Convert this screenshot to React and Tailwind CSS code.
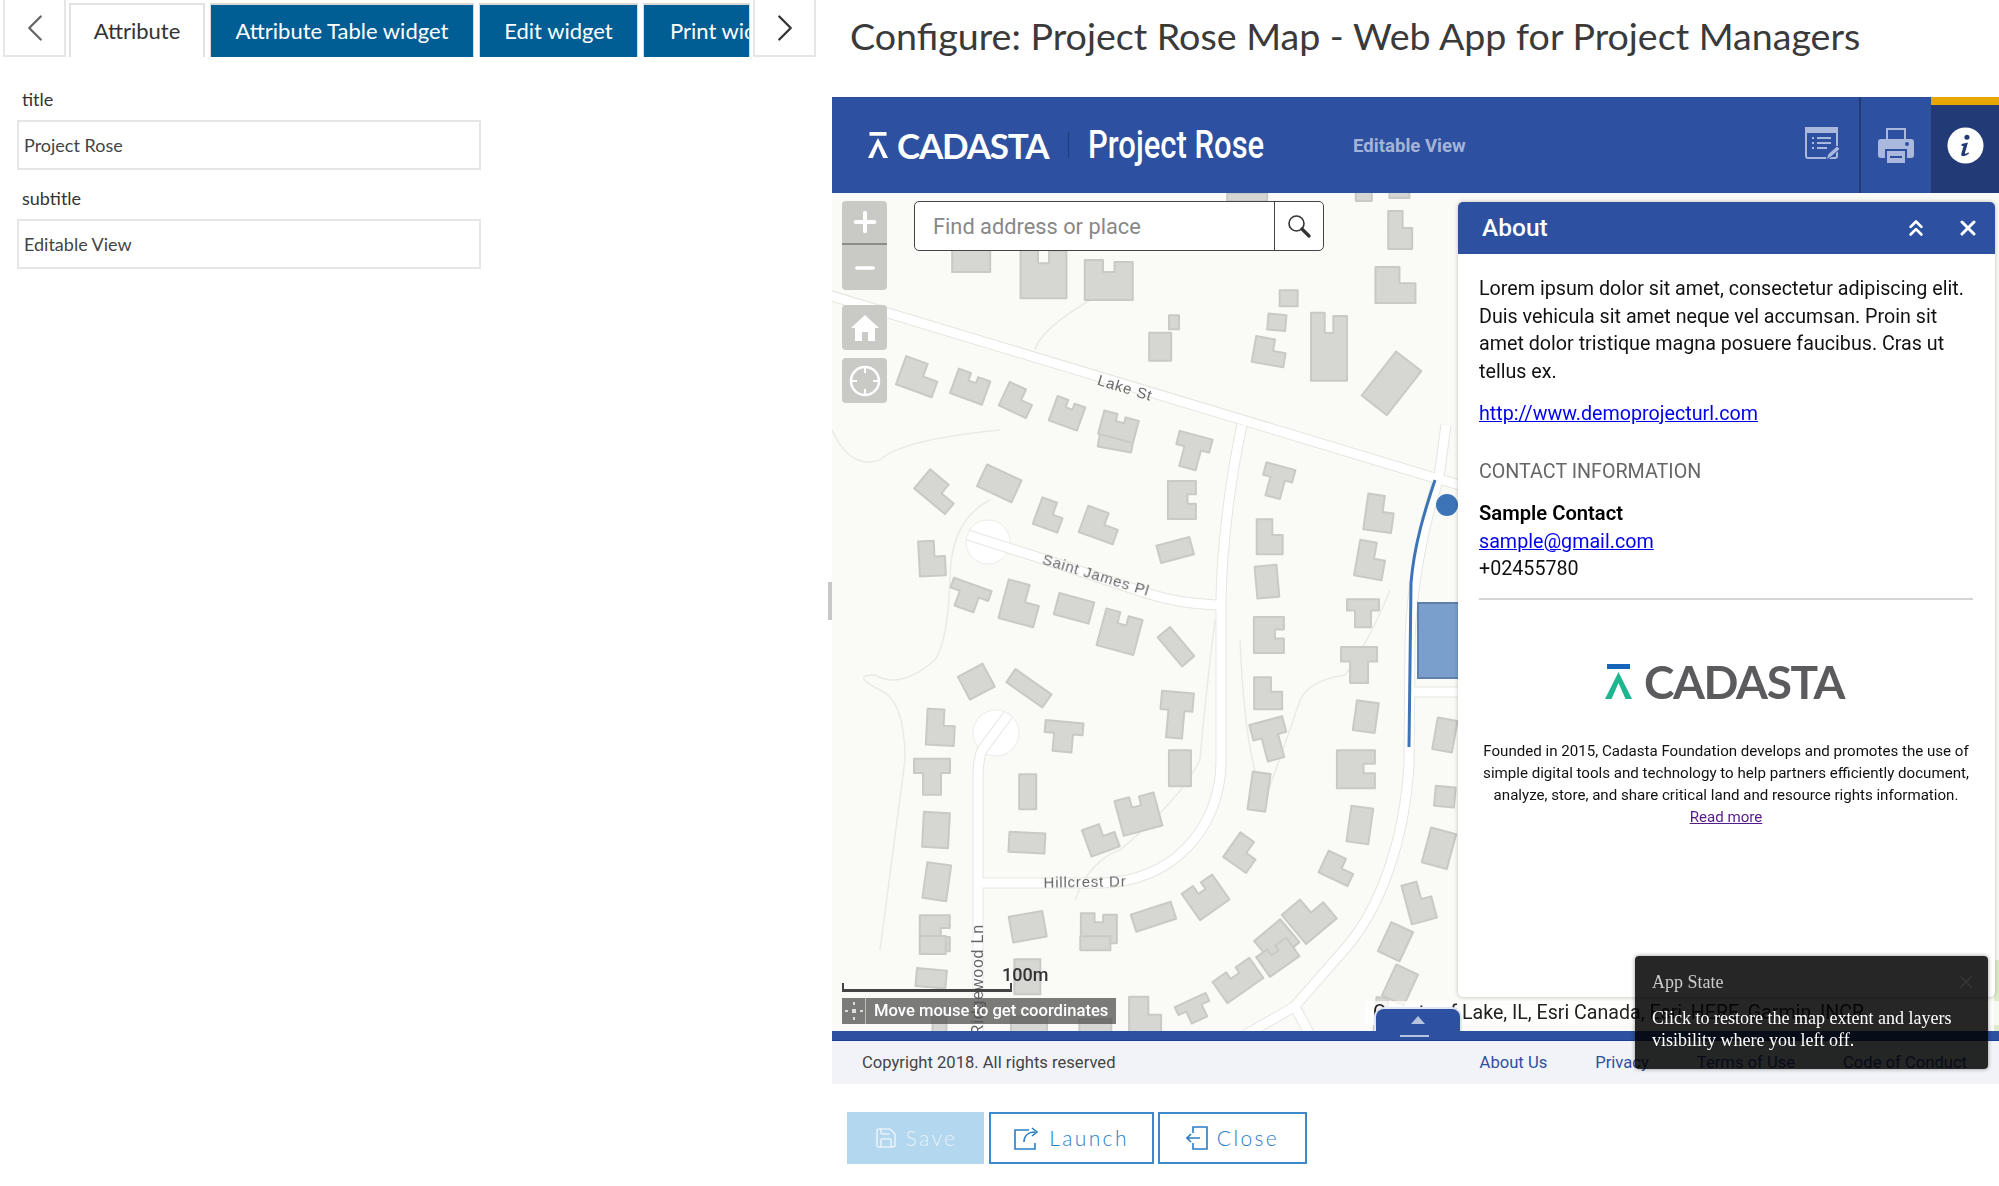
import { ChevronLeft, ChevronRight, ChevronsUp, Plus, Minus, X, Save } from 'lucide-react';

// building footprints in unit coords
const SHAPES = {
  R: [[0, 0], [1, 0], [1, 1], [0, 1]],
  L: [[0, 0], [0.6, 0], [0.6, 0.45], [1, 0.45], [1, 1], [0, 1]],
  U: [[0, 0], [0.38, 0], [0.38, 0.3], [0.62, 0.3], [0.62, 0.05], [1, 0.05], [1, 1], [0, 1]],
  T: [[0, 0], [1, 0], [1, 0.4], [0.75, 0.4], [0.75, 1], [0.25, 1], [0.25, 0.4], [0, 0.4]],
  C: [[0, 0], [1, 0], [1, 0.35], [0.7, 0.35], [0.7, 0.6], [1, 0.6], [1, 1], [0, 1]],
};

// [zoomX, zoomY, w, h, rot, shape] - measured off the middle crop
const MID = [
  [272, 185, 40, 25, 40, 'L'], [428, 160, 38, 24, 25, 'R'], [556, 255, 26, 28, 20, 'L'], [684, 285, 36, 28, 20, 'L'],
  [890, 210, 28, 38, 0, 'C'], [873, 360, 34, 18, -15, 'R'], [915, 65, 34, 34, 15, 'T'], [725, 20, 34, 26, 10, 'U'],
  [258, 385, 26, 35, -3, 'L'], [350, 500, 40, 26, 20, 'T'], [483, 520, 36, 40, 15, 'L'], [617, 535, 36, 22, 15, 'R'],
  [733, 605, 38, 38, 15, 'U'], [875, 650, 38, 16, 50, 'R'], [370, 755, 28, 26, -28, 'R'], [503, 775, 44, 16, 35, 'R'],
  [280, 892, 28, 36, 3, 'L'], [590, 920, 38, 30, 5, 'T'], [875, 855, 32, 46, 5, 'T'], [885, 1015, 22, 36, 0, 'R'],
  [258, 1040, 36, 36, 0, 'T'], [500, 1085, 17, 35, 0, 'R'], [268, 1200, 26, 35, 3, 'R'], [270, 1355, 24, 36, 8, 'R'],
  [498, 1238, 36, 20, 3, 'R'], [685, 1225, 30, 28, -20, 'L'], [780, 1150, 40, 36, -15, 'U'], [265, 1510, 30, 36, 0, 'C'],
  [500, 1490, 34, 26, -10, 'R'], [680, 1495, 36, 30, 0, 'U'], [818, 1460, 42, 18, -18, 'R'], [950, 1400, 36, 32, -35, 'U'],
  [1212, 1460, 40, 38, -40, 'L'], [1130, 1535, 34, 30, -40, 'R'], [1045, 1268, 28, 30, 35, 'L'], [1085, 1085, 18, 38, 8, 'R'],
  [1115, 930, 34, 40, -15, 'T'], [1108, 790, 28, 32, 0, 'L'], [1110, 615, 30, 36, 0, 'C'], [1105, 455, 22, 32, -5, 'R'],
  [1112, 320, 26, 35, 0, 'L'], [1130, 155, 30, 32, 15, 'T'], [1338, 705, 36, 36, 0, 'T'], [1348, 550, 32, 28, 0, 'T'],
  [1368, 390, 28, 36, 10, 'L'], [1390, 250, 28, 36, 8, 'L'], [1355, 860, 22, 30, 8, 'R'], [1330, 1018, 38, 38, 0, 'C'],
  [1340, 1185, 22, 36, 8, 'R'], [1285, 1315, 32, 24, 25, 'L'], [1490, 1415, 26, 40, -15, 'L'], [1540, 1255, 26, 36, 15, 'R'],
  [1555, 915, 20, 32, 10, 'R'], [1555, 1100, 20, 20, 5, 'R'], [1430, 1535, 24, 32, 25, 'R'],
];

// same, off the top crop
const TOP = [
  [357, 510, 38, 24, 0, 'R'], [540, 550, 46, 50, 0, 'U'], [705, 570, 48, 40, 0, 'U'], [1442, 420, 24, 38, 0, 'L'],
  [1430, 585, 40, 36, 0, 'L'], [1160, 625, 18, 16, 0, 'R'], [1130, 697, 18, 16, 5, 'R'], [870, 697, 10, 14, 0, 'R'],
  [835, 770, 22, 28, 0, 'R'], [1112, 785, 32, 26, 10, 'L'], [1262, 770, 36, 68, 0, 'U'], [1420, 880, 32, 56, 38, 'R'],
  [225, 860, 38, 30, 20, 'L'], [355, 890, 34, 26, 20, 'U'], [475, 930, 30, 26, 25, 'L'], [600, 970, 30, 26, 20, 'U'],
  [730, 1010, 36, 24, 15, 'U'], [1350, 318, 16, 10, 0, 'R'], [1440, 312, 20, 8, 0, 'R'], [1055, 322, 40, 8, 0, 'R'],
];

// same, off the bottom crop
const BOTTOM = [
  [305, 115, 30, 18, 5, 'R'], [595, 110, 26, 35, 0, 'R'], [1230, 120, 44, 26, -35, 'U'], [1350, 50, 36, 24, -35, 'U'],
  [950, 230, 32, 40, 0, 'L'], [1100, 210, 34, 22, -25, 'T'], [800, 10, 30, 14, 0, 'R'], [310, 15, 26, 18, 0, 'R'],
  [600, 265, 36, 24, 0, 'R'], [800, 270, 32, 22, 0, 'R'], [330, 262, 14, 22, 0, 'R'],
];

const BUILDINGS = [
  ...MID.map(([x, y, ...r]) => [830 + x / 2.529, 430 + y / 3, ...r]),
  ...TOP.map(([x, y, ...r]) => [830 + x / 2.529, 90 + y / 3, ...r]),
  ...BOTTOM.map(([x, y, ...r]) => [830 + x / 3.015, 940 + y / 3, ...r]),
  [1400, 985, 24, 34, 25, 'R'],
  [1385, 1015, 20, 34, 5, 'L'],
];

const ROADS = [
  'M825 294 L1435 478 L1470 488',
  'M1242 425 C1232 470 1222 540 1221 600 L1221 763 C1220 830 1170 883 1100 883 L978 883',
  'M1008 715 L982 750 Q978 760 978 777 L978 1035',
  'M968 535 L1040 558 L1146 593 Q1180 604 1217 605',
  'M1446 425 L1439 477 C1425 520 1412 580 1410 640 L1409 763 C1405 840 1380 910 1344 950 L1294 1007 L1245 1035',
  'M1294 1005 L1310 1035',
  'M1412 692 L1460 692',
];

const TRAILS = [
  'M832 430 Q850 470 880 460 Q900 440 1000 430',
  'M990 500 Q950 520 950 580 Q948 640 935 660 Q900 690 875 675 Q850 675 880 690 Q905 700 905 760 L880 950',
  'M1075 900 Q1090 860 1120 850 Q1180 800 1200 760 Q1205 700 1215 620',
  'M1240 640 Q1245 760 1265 800 Q1290 730 1300 700 Q1310 680 1345 675 Q1370 640 1390 590',
  'M1090 300 Q1040 330 1035 350',
];

function MapArt() {
  return (
    <svg width="1167" height="838" viewBox="832 193 1167 838" className="block">
      <defs>
        <filter id="soft">
          <feGaussianBlur stdDeviation="0.5" />
        </filter>
      </defs>
      <rect x="832" y="193" width="1167" height="838" fill="#fafaf6" />
      <rect x="1994" y="960" width="6" height="75" fill="#dcebc8" />
      {TRAILS.map((d) => (
        <path key={d} d={d} fill="none" stroke="#ebebe6" strokeWidth="1.5" />
      ))}
      <circle cx="988" cy="542" r="22" fill="#fff" stroke="#ececE8" />
      <circle cx="996" cy="733" r="23" fill="#fff" stroke="#ececE8" />
      {ROADS.map((d) => (
        <path key={d} d={d} fill="none" stroke="#e6e6e1" strokeWidth="11" />
      ))}
      {ROADS.map((d) => (
        <path key={d + 'w'} d={d} fill="none" stroke="#fff" strokeWidth="9" />
      ))}
      <g filter="url(#soft)">
        {BUILDINGS.map(([x, y, w, h, rot, s], i) => (
          <polygon
            key={i}
            transform={`translate(${x} ${y}) rotate(${rot})`}
            points={SHAPES[s].map(([px, py]) => `${(px - 0.5) * w},${(py - 0.5) * h}`).join(' ')}
            fill="#d6d6d3"
            stroke="#c9c9c6"
            strokeWidth="2"
            strokeLinejoin="round"
          />
        ))}
      </g>
      <rect x="1418" y="603" width="44" height="75" fill="#7a9fcc" stroke="#5f80ab" strokeWidth="2" />
      <path d="M1435 480 C1425 510 1414 545 1411 583 L1409 747" fill="none" stroke="#3d74b8" strokeWidth="3" />
      <circle cx="1447" cy="505" r="11" fill="#3d74b8" />
      <g fill="#666" fontFamily="'Liberation Sans',sans-serif" fontSize="15" letterSpacing="0.8">
        <text x="1125" y="393" textAnchor="middle" transform="rotate(17 1125 388)">Lake St</text>
        <text x="1096" y="580" textAnchor="middle" transform="rotate(17 1096 575)">Saint James Pl</text>
        <text x="1085" y="887" textAnchor="middle" transform="rotate(-1 1085 881)">Hillcrest Dr</text>
        <text x="978" y="985" fontSize="16" textAnchor="middle" transform="rotate(-90 978 980)">Ridgewood Ln</text>
      </g>
    </svg>
  );
}

function CadastaMark({ top = '#fff', legs = '#fff' }) {
  return (
    <svg viewBox="0 0 27 35" className="h-full w-full">
      <rect x="2" y="0" width="23" height="5" fill={top} />
      <path d="M13.5 8 L0 35 H6.5 L13.5 19 L20.5 35 H27 Z" fill={legs} />
    </svg>
  );
}

function FormIcon() {
  return (
    <svg viewBox="0 0 36 36" className="h-[36px] w-[36px]" fill="none" stroke="#a9b8dc" strokeWidth="2">
      <rect x="1" y="1" width="31" height="30" rx="2" />
      <rect x="1" y="1" width="31" height="4" fill="#a9b8dc" />
      <path d="M7 11h2M12 11h14M7 16h2M12 16h14M7 21h2M12 21h10" />
      <path d="M21 33l2-6 9-8 3 3-9 8z" fill="#a9b8dc" stroke="#2d50a0" strokeWidth="1" />
    </svg>
  );
}

function PrintIcon() {
  return (
    <svg viewBox="0 0 36 36" className="h-[36px] w-[36px]" fill="#a9b8dc">
      <path d="M8 1h20v12h-2V3H10v10H8z" />
      <path d="M3 12h30a3 3 0 0 1 3 3v13a3 3 0 0 1-3 3h-4v-9H7v9H3a3 3 0 0 1-3-3V15a3 3 0 0 1 3-3z" />
      <path d="M9 24h18v12H9zM12 29v2h12v-2z" fillRule="evenodd" />
      <circle cx="29" cy="17" r="2" fill="#2d50a0" />
    </svg>
  );
}

function InfoIcon() {
  return (
    <svg viewBox="0 0 38 38" className="h-[37px] w-[37px]">
      <circle cx="19" cy="19" r="18.5" fill="#fff" />
      <circle cx="20.5" cy="10.5" r="2.6" fill="#223a76" />
      <path d="M15 17.5 L21.5 16 L18.5 26.5 Q18.2 28 20.5 27 L22 26 L22.5 27.5 Q19.5 30 16.5 30 Q14 30 14.8 27 L17 19.5 L15 19.5 Z" fill="#223a76" />
    </svg>
  );
}

function HomeIcon() {
  return (
    <svg viewBox="0 0 30 30" className="h-[30px] w-[30px]" fill="#fff">
      <path d="M15 2 L29 15 H25 V28 H18 V19 H12 V28 H5 V15 H1 Z" />
    </svg>
  );
}

function LocateIcon() {
  return (
    <svg viewBox="0 0 32 32" className="h-[32px] w-[32px]" fill="none" stroke="#fff">
      <circle cx="16" cy="16" r="14" strokeWidth="2.5" />
      <path d="M16 1v7M16 24v7M1 16h7M24 16h7" strokeWidth="2" />
    </svg>
  );
}

function LensIcon() {
  return (
    <svg viewBox="0 0 24 24" className="h-[24px] w-[24px]" fill="none" stroke="#333">
      <circle cx="9.5" cy="9.5" r="7.5" strokeWidth="1.6" />
      <path d="M15 15l7 7" strokeWidth="3.2" strokeLinecap="round" />
    </svg>
  );
}

function LaunchIcon() {
  return (
    <svg viewBox="0 0 26 24" className="h-[24px] w-[26px]" fill="none" stroke="#2a7dc4" strokeWidth="1.6">
      <path d="M15 4H1v19h20v-6" />
      <path d="M10 16c0-6 4-10 11-10M18 2l5 4-5 4" />
    </svg>
  );
}

function CloseIcon() {
  return (
    <svg viewBox="0 0 22 24" className="h-[24px] w-[22px]" fill="none" stroke="#2a7dc4" strokeWidth="1.6">
      <path d="M7 7V1h14v22H7v-6" />
      <path d="M14 12H1M5 8l-4 4 4 4" />
    </svg>
  );
}

function LocatorDots() {
  return (
    <svg viewBox="0 0 20 20" className="h-[20px] w-[20px]" fill="#ddd">
      <rect x="8" y="8" width="4" height="4" />
      <rect x="9" y="1" width="2" height="3" />
      <rect x="9" y="16" width="2" height="3" />
      <rect x="1" y="9" width="3" height="2" />
      <rect x="16" y="9" width="3" height="2" />
    </svg>
  );
}

function Field({ label, value }) {
  return (
    <div className="mb-[17px]">
      <div className="mb-[10px] ml-[5px] text-[18px] leading-[22px] text-[#333]">{label}</div>
      <div className="flex h-[50px] w-[464px] items-center border-2 border-[#e6e6e6] pl-[5px] text-[18px] text-[#444]">{value}</div>
    </div>
  );
}

function WidgetTab({ label, className }) {
  return (
    <div className={`flex h-[54px] shrink-0 items-center overflow-hidden whitespace-nowrap border-x border-t-2 border-[#d9d9d9] bg-[#005e95] pb-[2px] text-[22px] text-white ${className}`}>
      {label}
    </div>
  );
}

export default function App() {
  return (
    <div className="flex h-[1186px] w-[1999px] overflow-hidden bg-white font-['Lato',sans-serif]">
      <div className="w-[832px] shrink-0">
        <div className="flex h-[57px] items-end pl-[3px]">
          <div className="-mt-[1px] flex h-[57px] w-[63px] items-center justify-center border-x-2 border-b-2 border-[#e6e6e6] text-[#666]">
            <ChevronLeft size={46} strokeWidth={1.2} />
          </div>
          <div className="ml-[3px] flex h-[54px] w-[136px] items-center justify-center border-x-2 border-t-2 border-[#e2e2e2] pb-[2px] text-[22px] text-[#333]">Attribute</div>
          <WidgetTab label="Attribute Table widget" className="ml-[5px] w-[264px] justify-center" />
          <WidgetTab label="Edit widget" className="ml-[5px] w-[159px] justify-center" />
          <WidgetTab label="Print widget" className="ml-[5px] w-[107px] pl-[26px]" />
          <div className="ml-[3px] flex h-[57px] w-[63px] items-center justify-center border-x-2 border-b-2 border-[#e6e6e6] text-[#333]">
            <ChevronRight size={46} strokeWidth={1.2} />
          </div>
        </div>
        <div className="pl-[17px] pt-[31px]">
          <Field label="title" value="Project Rose" />
          <Field label="subtitle" value="Editable View" />
        </div>
      </div>

      <div className="relative flex w-[1167px] flex-col">
        <div className="flex h-[97px] items-start whitespace-nowrap pl-[18px] pt-[13px] text-[37.6px] leading-[46px] text-[#3a3a3a]">
          Configure: Project Rose Map - Web App for Project Managers
        </div>

        <div className="flex h-[96px] items-center bg-[#2d50a0] font-['Roboto',sans-serif] text-white">
          <div className="ml-[36px] h-[26px] w-[20px]">
            <CadastaMark />
          </div>
          <div className="ml-[9px] w-[171px] whitespace-nowrap font-['Lato',sans-serif] text-[35px] font-bold leading-none tracking-[-1.2px]">CADASTA</div>
          <div className="h-[26px] w-px bg-[#1f3a78]" />
          <div className="ml-[19px] w-[265px] origin-left scale-x-[0.795] whitespace-nowrap text-[39px] font-medium leading-none">Project Rose</div>
          <div className="mt-[3px] text-[18.6px] font-bold text-[#a5b3d6]">Editable View</div>
          <div className="ml-auto mr-[18px]">
            <FormIcon />
          </div>
          <div className="flex h-full items-center border-l-2 border-[#223a76] px-[17px]">
            <PrintIcon />
          </div>
          <div className="flex h-full w-[68px] items-center justify-center border-t-[8px] border-[#e8a600] bg-[#223a76] pb-[8px]">
            <InfoIcon />
          </div>
        </div>

        <div className="relative h-[838px] bg-[#fafaf6] font-['Roboto',sans-serif]">
          <MapArt />
          <div className="absolute -left-[4px] top-[389px] h-[38px] w-[4px] bg-[#c8c8c8]" />

          <div className="absolute left-[10px] top-[8px] w-[45px]">
            <div className="overflow-hidden rounded-[4px] bg-[#c9c9c5] text-white">
              <div className="flex h-[44px] items-center justify-center border-b-2 border-[#8b8b88]">
                <Plus size={32} strokeWidth={3} />
              </div>
              <div className="flex h-[45px] items-center justify-center">
                <Minus size={28} strokeWidth={3} />
              </div>
            </div>
            <div className="mt-[15px] flex h-[45px] items-center justify-center rounded-[4px] bg-[#c9c9c5]">
              <HomeIcon />
            </div>
            <div className="mt-[8px] flex h-[45px] items-center justify-center rounded-[4px] bg-[#c9c9c5]">
              <LocateIcon />
            </div>
          </div>

          <div className="absolute left-[82px] top-[8px] flex h-[50px] w-[410px] rounded-[5px] border border-[#444] bg-white">
            <div className="flex flex-1 items-center pl-[18px] pt-[2px] text-[21.8px] text-[#888]">Find address or place</div>
            <div className="flex w-[49px] items-center justify-center border-l border-[#444]">
              <LensIcon />
            </div>
          </div>

          <div className="absolute left-[626px] top-[9px] h-[795px] w-[537px] rounded-[5px] bg-white shadow-[0_0_4px_rgba(0,0,0,0.25)]">
            <div className="flex h-[52px] items-center rounded-t-[5px] bg-[#2d50a0] pl-[24px] text-white">
              <div className="text-[24.5px] font-medium">About</div>
              <ChevronsUp size={26} strokeWidth={2.5} className="ml-auto" />
              <X size={24} strokeWidth={3} className="ml-[27px] mr-[15px]" />
            </div>
            <div className="px-[21px] pt-[21px] text-[19.7px] leading-[27.5px] text-[#111]">
              <p className="w-[497px]">
                Lorem ipsum dolor sit amet, consectetur adipiscing elit. Duis vehicula sit amet neque vel accumsan. Proin sit amet dolor tristique magna posuere faucibus. Cras ut tellus ex.
              </p>
              <a className="mt-[15px] block text-[#0000ee] underline">http://www.demoprojecturl.com</a>
              <div className="mt-[30px] text-[#666]">CONTACT INFORMATION</div>
              <div className="mt-[15px] text-[20.2px] font-semibold text-black">Sample Contact</div>
              <a className="block text-[#0000ee] underline">sample@gmail.com</a>
              <div>+02455780</div>
              <div className="mt-[15px] h-[2px] w-[494px] bg-[#d4d4d4]" />
              <div className="mt-[64px] flex h-[36px] items-center pl-[126px]">
                <div className="h-[35px] w-[27px]">
                  <CadastaMark top="#1565b8" legs="#1fb58f" />
                </div>
                <div className="ml-[12px] whitespace-nowrap font-['Lato',sans-serif] text-[46px] font-bold leading-none tracking-[-1.4px] text-[#5b5b5e]">CADASTA</div>
              </div>
              <div className="mt-[40px] w-[494px] text-center text-[15.1px] leading-[22px] text-[#111]">
                Founded in 2015, Cadasta Foundation develops and promotes the use of simple digital tools and technology to help partners efficiently document, analyze, store, and share critical land and resource rights information.
                <br />
                <a className="text-[#551a8b] underline">Read more</a>
              </div>
            </div>
          </div>

          <div className="absolute left-[10px] top-[790px] h-[9px] w-[170px] border-x-2 border-b-[3px] border-[#444]" />
          <div className="absolute left-[170px] top-[770px] text-[18px] font-medium leading-[24px] text-[#333]">100m</div>
          <div className="absolute left-[10px] top-[805px] flex h-[26px] w-[274px] items-center bg-[#505050bf] text-white">
            <div className="flex h-full w-[24px] items-center justify-center border-r border-[#bbb]">
              <LocatorDots />
            </div>
            <div className="ml-[8px] whitespace-nowrap text-[16.6px] font-medium">Move mouse to get coordinates</div>
          </div>

          <div className="absolute left-[533px] top-[808px] flex h-[24px] w-[634px] items-center whitespace-nowrap bg-[#ffffffc0] pl-[8px] text-[19.6px] leading-none text-[#222]">
            County of Lake, IL, Esri Canada, Esri, HERE, Garmin, INCR
          </div>
          <div className="absolute left-[542px] top-[814px] flex h-[24px] w-[88px] justify-center rounded-t-[10px] border-x-2 border-t-2 border-[#dfe5f3] bg-[#2d50a0] pt-[7px]">
            <div className="h-0 w-0 border-x-[7px] border-b-[8px] border-x-transparent border-b-[#b5c2e0]" />
          </div>
        </div>

        <div className="flex h-[10px] justify-start border-b border-[#1c3f92] bg-[#2d50a0]">
          <div className="ml-[568px] mt-[4px] h-[2px] w-[29px] bg-[#b5c2e0]" />
        </div>
        <div className="flex h-[43px] items-center bg-[#f1f3f8] pl-[30px] pt-[1px] font-['Roboto',sans-serif] text-[16.6px] text-[#444]">
          <div>Copyright 2018. All rights reserved</div>
          <div className="ml-auto flex gap-[48px] pr-[32px] text-[#2d50a0]">
            <span>About Us</span>
            <span>Privacy</span>
            <span>Terms of Use</span>
            <span>Code of Conduct</span>
          </div>
        </div>

        <div className="flex gap-[5px] pl-[15px] pt-[28px] text-[21px] font-light tracking-[2.4px]">
          <div className="flex h-[52px] w-[137px] items-center justify-center gap-[8px] bg-[#b3d7ee] text-[#e6f2fa]">
            <Save size={24} strokeWidth={1.6} />
            Save
          </div>
          <div className="flex h-[52px] w-[165px] items-center justify-center gap-[9px] border-2 border-[#3d88cc] text-[#2a7dc4]">
            <LaunchIcon />
            Launch
          </div>
          <div className="-ml-[1px] flex h-[52px] w-[149px] items-center justify-center gap-[9px] border-2 border-[#3d88cc] text-[#2a7dc4]">
            <CloseIcon />
            Close
          </div>
        </div>

        <div className="absolute left-[803px] top-[956px] h-[113px] w-[353px] rounded-[4px] bg-[#000000d9] pl-[17px] pr-[10px] font-['Liberation_Serif',serif] shadow-[0_0_4px_rgba(0,0,0,0.4)]">
          <div className="mt-[15px] flex items-center justify-between pr-[7px] text-[18px] leading-[22px] text-[#ccc]">
            App State
            <X size={20} color="#333" strokeWidth={2.5} className="-mr-[5px]" />
          </div>
          <div className="mt-[14px] text-[18px] leading-[22px] text-white">
            Click to restore the map extent and layers visibility where you left off.
          </div>
        </div>
      </div>
    </div>
  );
}
